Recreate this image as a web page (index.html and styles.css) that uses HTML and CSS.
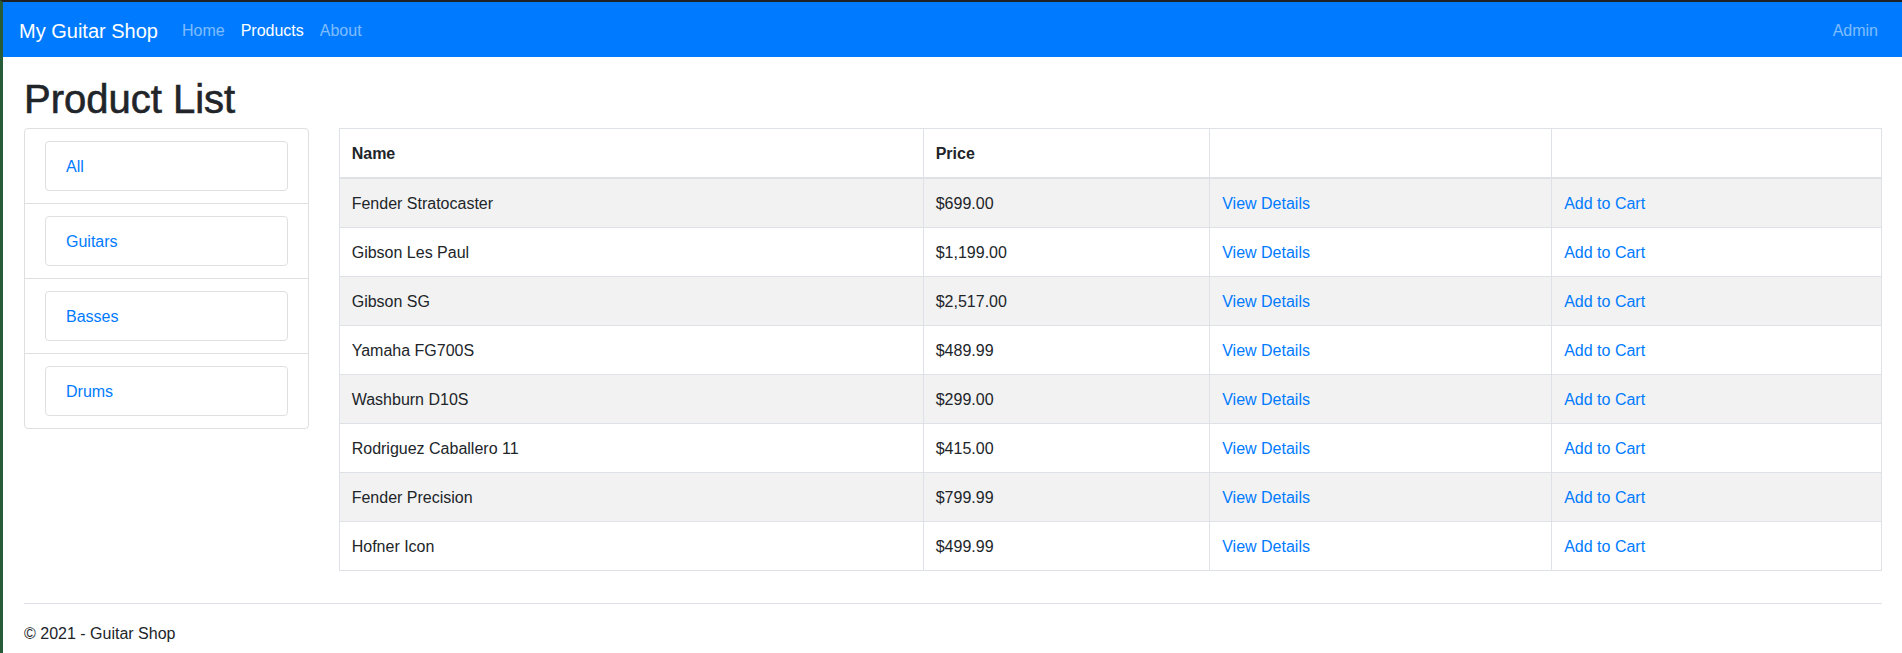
FILE: index.html
```html
<!DOCTYPE html>
<html lang="en">
<head>
<meta charset="utf-8">
<title>Product List - My Guitar Shop</title>
<link rel="stylesheet" href="styles.css">
</head>
<body>
<header class="navbar">
  <a class="brand" href="#">My Guitar Shop</a>
  <nav class="nav-main">
    <a class="nav-link" href="#">Home</a>
    <a class="nav-link active" href="#">Products</a>
    <a class="nav-link" href="#">About</a>
  </nav>
  <nav class="nav-right">
    <a class="nav-link" href="#">Admin</a>
  </nav>
</header>
<main class="container">
  <h1 class="page-title">Product List</h1>
  <div class="layout">
    <aside class="card">
      <ul class="list-group">
        <li class="list-item"><a class="cat-btn" href="#">All</a></li>
        <li class="list-item"><a class="cat-btn" href="#">Guitars</a></li>
        <li class="list-item"><a class="cat-btn" href="#">Basses</a></li>
        <li class="list-item"><a class="cat-btn" href="#">Drums</a></li>
      </ul>
    </aside>
    <section class="table-wrap">
      <table class="products">
        <colgroup>
          <col class="c-name"><col class="c-price"><col class="c-view"><col class="c-cart">
        </colgroup>
        <thead>
          <tr><th>Name</th><th>Price</th><th></th><th></th></tr>
        </thead>
        <tbody>
          <tr><td>Fender Stratocaster</td><td>$699.00</td><td><a href="#">View Details</a></td><td><a href="#">Add to Cart</a></td></tr>
          <tr><td>Gibson Les Paul</td><td>$1,199.00</td><td><a href="#">View Details</a></td><td><a href="#">Add to Cart</a></td></tr>
          <tr><td>Gibson SG</td><td>$2,517.00</td><td><a href="#">View Details</a></td><td><a href="#">Add to Cart</a></td></tr>
          <tr><td>Yamaha FG700S</td><td>$489.99</td><td><a href="#">View Details</a></td><td><a href="#">Add to Cart</a></td></tr>
          <tr><td>Washburn D10S</td><td>$299.00</td><td><a href="#">View Details</a></td><td><a href="#">Add to Cart</a></td></tr>
          <tr><td>Rodriguez Caballero 11</td><td>$415.00</td><td><a href="#">View Details</a></td><td><a href="#">Add to Cart</a></td></tr>
          <tr><td>Fender Precision</td><td>$799.99</td><td><a href="#">View Details</a></td><td><a href="#">Add to Cart</a></td></tr>
          <tr><td>Hofner Icon</td><td>$499.99</td><td><a href="#">View Details</a></td><td><a href="#">Add to Cart</a></td></tr>
        </tbody>
      </table>
    </section>
  </div>
  <footer class="footer">&copy; 2021 - Guitar Shop</footer>
</main>
</body>
</html>
```
FILE: styles.css
```css
* { box-sizing: border-box; }
html, body { margin: 0; padding: 0; overflow: hidden; }
body {
  font-family: "Liberation Sans", Arial, sans-serif;
  font-size: 16px;
  line-height: 24px;
  color: #212529;
  background: #fff;
  border-top: 2px solid #1f2224;
  border-left: 3px solid #265c3a;
  height: 653px;
}
a { color: #007bff; text-decoration: none; }

.navbar {
  display: flex;
  align-items: center;
  height: 55px;
  padding: 0 16px;
  background: #007bff;
}
.brand {
  color: #fff;
  font-size: 20px;
  line-height: 30px;
  padding: 6px 0 4px;
  margin-right: 16px;
  white-space: nowrap;
}
.nav-main, .nav-right { display: flex; }
.nav-right { margin-left: auto; }
.nav-link {
  display: block;
  padding: 9px 8px 7px;
  line-height: 24px;
  color: rgba(255, 255, 255, 0.5);
}
.nav-link.active { color: #fff; }

.container {
  padding: 18px 20px 0 21px;
}
.page-title {
  margin: 0 0 5px;
  font-size: 40px;
  line-height: 48px;
  font-weight: 500;
  -webkit-text-stroke: 0.6px #212529;
}
.layout {
  display: grid;
  grid-template-columns: 284.7px 1fr;
  column-gap: 30px;
  align-items: start;
}
.card {
  border: 1px solid #dfdfdf;
  border-radius: 4px;
}
.list-group { list-style: none; margin: 0; padding: 0; }
.list-item {
  padding: 12px 20px;
  border-bottom: 1px solid #dfdfdf;
}
.list-item:last-child { border-bottom: 0; }
.cat-btn {
  display: block;
  padding: 13px 20px 11px;
  line-height: 24px;
  border: 1px solid #dfdfdf;
  border-radius: 4px;
  color: #007bff;
}

.products {
  width: 100%;
  border-collapse: collapse;
  table-layout: fixed;
  border: 1px solid #dee2e6;
}
.c-name { width: 584px; }
.c-price { width: 286.5px; }
.c-view { width: 342px; }
.products th, .products td {
  padding: 13px 12px 11px;
  border: 1px solid #dee2e6;
  text-align: left;
  vertical-align: top;
  line-height: 24px;
  white-space: nowrap;
}
.products th { font-weight: bold; height: 49px; }
.products thead th { border-bottom: 2px solid #dee2e6; }
.products tbody tr:nth-child(odd) { background: #f2f2f2; }

.footer {
  margin-top: 32px;
  border-top: 1px solid #dee2e6;
  padding-top: 18px;
  line-height: 24px;
  color: #212529;
}
```
